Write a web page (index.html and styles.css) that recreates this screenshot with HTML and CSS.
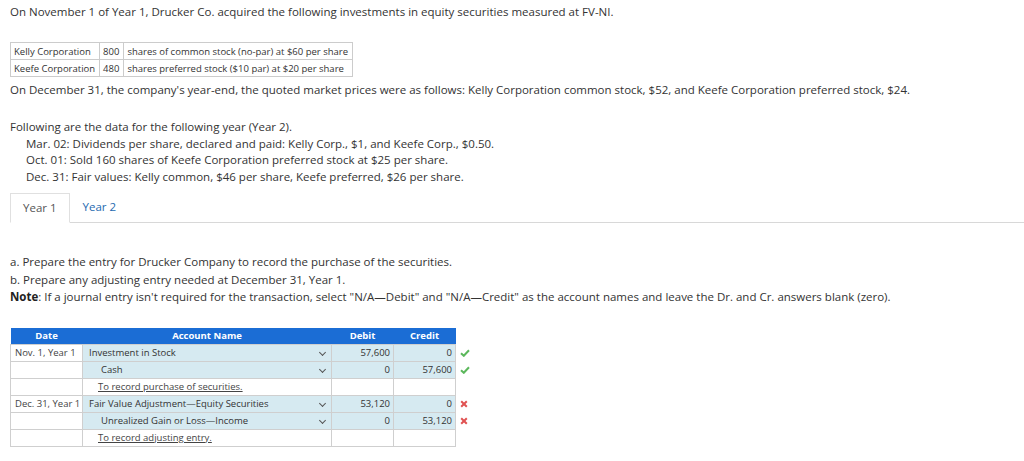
FILE: index.html
```html
<!DOCTYPE html>
<html>
<head>
<meta charset="utf-8">
<link rel="stylesheet" href="styles.css">
</head>
<body>
<div class="page">
  <p class="intro">On November 1 of Year 1, Drucker Co. acquired the following investments in equity securities measured at FV-NI.</p>
  <table class="inv">
    <tr><td>Kelly Corporation</td><td>800</td><td>shares of common stock (no-par) at $60 per share</td></tr>
    <tr><td>Keefe Corporation</td><td>480</td><td>shares preferred stock ($10 par) at $20 per share</td></tr>
  </table>
  <p class="prices">On December 31, the company's year-end, the quoted market prices were as follows: Kelly Corporation common stock, $52, and Keefe Corporation preferred stock, $24.</p>
  <div class="data">
    <p>Following are the data for the following year (Year 2).</p>
    <p class="ind">Mar. 02: Dividends per share, declared and paid: Kelly Corp., $1, and Keefe Corp., $0.50.</p>
    <p class="ind">Oct. 01: Sold 160 shares of Keefe Corporation preferred stock at $25 per share.</p>
    <p class="ind">Dec. 31: Fair values: Kelly common, $46 per share, Keefe preferred, $26 per share.</p>
  </div>
  <div class="tabs">
    <div class="tab active">Year 1</div>
    <div class="tab">Year 2</div>
  </div>
  <div class="instr">
    <p>a. Prepare the entry for Drucker Company to record the purchase of the securities.</p>
    <p>b. Prepare any adjusting entry needed at December 31, Year 1.</p>
    <p><b>Note</b>: If a journal entry isn't required for the transaction, select "N/A—Debit" and "N/A—Credit" as the account names and leave the Dr. and Cr. answers blank (zero).</p>
  </div>
  <div class="jwrap">
    <table class="journal">
      <thead>
        <tr><th class="c-date">Date</th><th class="c-acct">Account Name</th><th class="c-num">Debit</th><th class="c-num">Credit</th></tr>
      </thead>
      <tbody>
        <tr><td class="date">Nov. 1, Year 1</td><td class="acct in"><span>Investment in Stock</span><i class="chev"></i></td><td class="num in">57,600</td><td class="num in">0</td><td class="mark"><svg class="ok" width="10" height="8" viewBox="0 0 10 8"><path d="M1 4.2 L3.8 6.8 L9 1.2" fill="none" stroke="#5cb85c" stroke-width="2"/></svg></td></tr>
        <tr><td class="date"></td><td class="acct in cr"><span>Cash</span><i class="chev"></i></td><td class="num in">0</td><td class="num in">57,600</td><td class="mark"><svg class="ok" width="10" height="8" viewBox="0 0 10 8"><path d="M1 4.2 L3.8 6.8 L9 1.2" fill="none" stroke="#5cb85c" stroke-width="2"/></svg></td></tr>
        <tr><td class="date"></td><td class="acct memo"><span>To record purchase of securities.</span></td><td class="num"></td><td class="num"></td><td class="mark"></td></tr>
        <tr><td class="date">Dec. 31, Year 1</td><td class="acct in"><span>Fair Value Adjustment—Equity Securities</span><i class="chev"></i></td><td class="num in">53,120</td><td class="num in">0</td><td class="mark"><svg class="bad" width="8" height="8" viewBox="0 0 8 8"><path d="M1.2 1.2 L6.8 6.8 M6.8 1.2 L1.2 6.8" fill="none" stroke="#e05252" stroke-width="2"/></svg></td></tr>
        <tr><td class="date"></td><td class="acct in cr"><span>Unrealized Gain or Loss—Income</span><i class="chev"></i></td><td class="num in">0</td><td class="num in">53,120</td><td class="mark"><svg class="bad" width="8" height="8" viewBox="0 0 8 8"><path d="M1.2 1.2 L6.8 6.8 M6.8 1.2 L1.2 6.8" fill="none" stroke="#e05252" stroke-width="2"/></svg></td></tr>
        <tr><td class="date"></td><td class="acct memo"><span>To record adjusting entry.</span></td><td class="num"></td><td class="num"></td><td class="mark"></td></tr>
      </tbody>
    </table>
  </div>
</div>
</body>
</html>
```
FILE: styles.css
```css
html, body { margin: 0; padding: 0; background: #fff; }
body {
  font-family: "Open Sans", "Liberation Sans", sans-serif;
  font-size: 11.5px;
  color: #333;
}
p { margin: 0; }
.page { padding: 4px 0 0 10px; }
.intro { line-height: 16px; }
.inv {
  border-collapse: collapse;
  margin-top: 22px;
  font-size: 9.5px;
}
.inv td {
  border: 1px solid #ccc;
  padding: 0 4px 0 3px;
  height: 16px;
  line-height: 15px;
}
.prices { margin-top: 5px; line-height: 16px; }
.data { margin-top: 21px; line-height: 16.5px; }
.data .ind { padding-left: 16px; }
.tabs {
  display: flex;
  margin-top: 8px;
  border-bottom: 1px solid #d8d8d8;
  height: 29px;
}
.tab {
  padding: 0 12px 0 13px;
  line-height: 27px;
  color: #1f6ab0;
}
.tab.active {
  padding: 0 12px 0 12px;
  color: #555;
  border: 1px solid #e0e0e0;
  border-bottom: 1px solid #fff;
  margin-bottom: -1px;
  height: 28px;
}
.instr { margin-top: 30px; line-height: 17.5px; }
.instr b { font-weight: 700; color: #222; }
.jwrap { margin-top: 22px; }
.journal {
  border-collapse: collapse;
  font-size: 9.5px;
  table-layout: fixed;
}
.journal th {
  background: #1b6dd5;
  color: #fff;
  font-weight: 700;
  height: 16px;
  padding: 0;
  line-height: 16px;
}
.c-date { width: 72px; }
.c-acct { width: 249px; }
.c-num { width: 62px; }
.journal td {
  border: 1px solid #cfcfcf;
  height: 16px;
  padding: 0;
  line-height: 16px;
}
.journal td.date { padding-left: 4px; color: #444; }
.journal td.in { background: #d6eaf1; }
.journal td.acct { position: relative; padding-left: 6px; }
.journal td.acct.cr { padding-left: 18px; }
.journal td.memo { padding-left: 15px; }
.journal td.memo span { text-decoration: underline; color: #444; }
.journal td.num { text-align: right; padding-right: 3px; }
.journal td.mark {
  border: none;
  border-left: 1px solid #d8d8d8;
  width: 16px;
  padding-left: 4px;
}
.mark svg { display: block; }
.chev {
  position: absolute;
  right: 6px;
  top: 5px;
  width: 4px;
  height: 4px;
  border-right: 1px solid #555;
  border-bottom: 1px solid #555;
  transform: rotate(45deg);
}
```
